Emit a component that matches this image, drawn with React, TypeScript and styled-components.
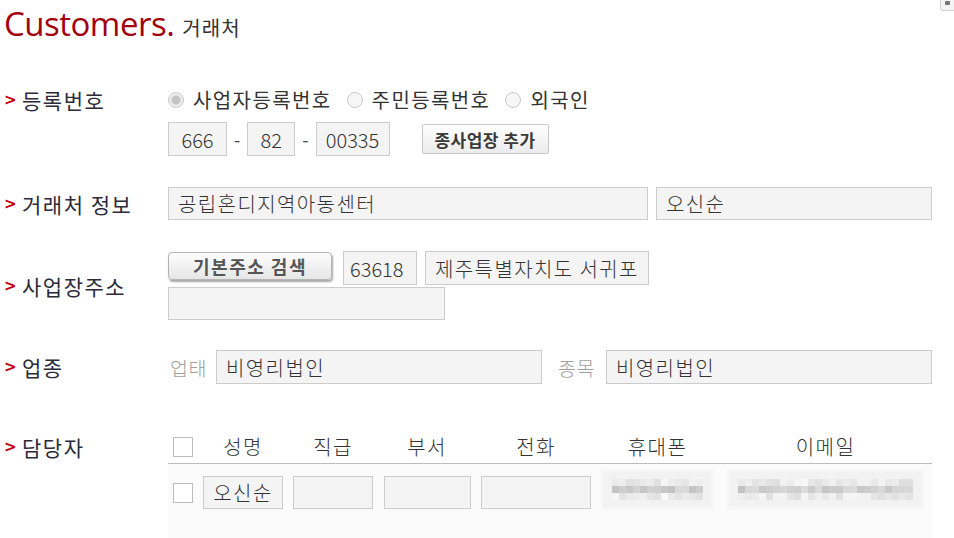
import * as React from "react";
import styled, { createGlobalStyle, css } from "styled-components";

const GlobalStyle = createGlobalStyle`
  html, body {
    margin: 0;
    padding: 0;
    background: #ffffff;
  }
  body {
    font-family: "Noto Sans CJK KR", "Noto Sans", sans-serif;
    color: #333333;
    overflow: hidden;
  }
`;

const Page = styled.div`
  position: relative;
  width: 954px;
  height: 538px;
  padding-left: 4px;
  box-sizing: border-box;
  overflow: hidden;
`;

const Corner = styled.div`
  position: absolute;
  top: -5px;
  right: -8px;
  width: 20px;
  height: 14px;
  border: 1px solid #cfcfcf;
  border-radius: 3px;
  background: #f4f4f4;
  &::after {
    content: "";
    position: absolute;
    left: 4px;
    top: 5px;
    width: 5px;
    height: 4px;
    background: #777;
    border-radius: 1px;
  }
`;

const Title = styled.h1`
  display: flex;
  align-items: baseline;
  height: 50px;
  margin: 0;
  padding-top: 4px;
  box-sizing: border-box;
  font-weight: normal;
`;

const TitleMain = styled.span`
  font-family: "Open Sans", Lato, sans-serif;
  font-size: 33px;
  font-weight: 400;
  letter-spacing: -0.5px;
  line-height: 40px;
  color: #a3000f;
`;

const TitleSub = styled.span`
  margin-left: 8px;
  font-size: 20px;
  letter-spacing: 1px;
  color: #333;
`;

const Section = styled.section<{ $top: number; $align?: "start" | "center" }>`
  display: grid;
  grid-template-columns: 164px 764px;
  align-items: ${(p) => p.$align ?? "center"};
  margin-top: ${(p) => p.$top}px;
`;

const Label = styled.div<{ $h?: number }>`
  display: flex;
  align-items: center;
  height: ${(p) => (p.$h ? `${p.$h}px` : "auto")};
  font-size: 21px;
  font-weight: 400;
  letter-spacing: 1.5px;
  color: #2b2b3a;
  white-space: nowrap;
  &::before {
    content: ">";
    width: 18px;
    font-family: "DejaVu Sans", sans-serif;
    font-size: 15px;
    font-weight: bold;
    letter-spacing: 0;
    color: #c40016;
  }
`;

const Column = styled.div<{ $gap: number }>`
  display: flex;
  flex-direction: column;
  gap: ${(p) => p.$gap}px;
`;

const Line = styled.div<{ $gap?: number }>`
  display: flex;
  align-items: center;
  gap: ${(p) => p.$gap ?? 8}px;
`;

const RadioGroup = styled.div`
  display: flex;
  align-items: center;
  height: 24px;
  gap: 15px;
`;

const RadioItem = styled.label`
  display: flex;
  align-items: center;
  gap: 9px;
  font-size: 20px;
  letter-spacing: 1.4px;
  line-height: 24px;
  color: #333;
  white-space: nowrap;
`;

const RadioDot = styled.span<{ $checked?: boolean }>`
  width: 16px;
  height: 16px;
  border-radius: 50%;
  box-sizing: border-box;
  border: 1px solid #c9c9c9;
  background: #f7f7f7;
  ${(p) =>
    p.$checked &&
    css`
      background: radial-gradient(circle, #c4c4c4 0 4px, #ececec 5px);
    `}
`;

const Field = styled.input<{ $w: number; $h?: number; $center?: boolean; $num?: boolean }>`
  flex-shrink: 0;
  width: ${(p) => p.$w}px;
  height: ${(p) => p.$h ?? 34}px;
  box-sizing: border-box;
  padding: 0 ${(p) => (p.$num ? 6 : 9)}px;
  border: 1px solid #cccccc;
  background: #f4f4f4;
  font-family: "Noto Sans CJK KR", "Noto Sans", sans-serif;
  font-size: 20px;
  font-weight: 300;
  letter-spacing: ${(p) => (p.$num ? 0 : 1.4)}px;
  color: #333;
  text-align: ${(p) => (p.$center ? "center" : "left")};
  outline: none;
`;

const Dash = styled.span`
  font-size: 18px;
  color: #444;
  margin: 0 2px;
`;

const SmallButton = styled.button`
  flex-shrink: 0;
  height: 30px;
  width: 127px;
  margin-left: 27px;
  padding: 0;
  border: 1px solid #c8c8c8;
  border-radius: 2px;
  background: linear-gradient(#ffffff, #ebebeb);
  font-family: "Noto Sans CJK KR", sans-serif;
  font-size: 17px;
  font-weight: bold;
  letter-spacing: 0.5px;
  color: #3a3a3a;
  cursor: pointer;
`;

const SearchButton = styled.button`
  flex-shrink: 0;
  width: 164px;
  height: 28px;
  margin-top: 1px;
  margin-right: 3px;
  align-self: flex-start;
  padding: 0;
  border: 1px solid #b4b4b4;
  border-radius: 4px;
  background: linear-gradient(#fdfdfd, #e6e6e6);
  box-shadow: 1px 2px 2px rgba(0, 0, 0, 0.35);
  font-family: "Noto Sans CJK KR", sans-serif;
  font-size: 18px;
  font-weight: bold;
  letter-spacing: 1.5px;
  color: #555;
  cursor: pointer;
`;

const Caption = styled.span<{ $lead: number; $w: number }>`
  flex-shrink: 0;
  width: ${(p) => p.$w}px;
  white-space: nowrap;
  font-size: 19.5px;
  font-weight: 300;
  letter-spacing: 0.5px;
  color: #a0a0a0;
  margin-left: ${(p) => p.$lead}px;
`;

const Table = styled.div`
  display: flex;
  flex-direction: column;
`;

const TableRow = styled.div<{ $head?: boolean }>`
  display: grid;
  grid-template-columns: 30px 90px 90px 98px 120px 123px 213px;
  justify-items: center;
  align-items: center;
  ${(p) =>
    p.$head
      ? css`
          height: 33px;
          border-bottom: 1px solid #bdbdbd;
        `
      : css`
          padding: 11px 0 40px;
          background: #fbfbfb;
        `}
`;

const HeadCell = styled.span`
  font-size: 20px;
  font-weight: 300;
  letter-spacing: 1.4px;
  color: #333;
  line-height: 24px;
  white-space: nowrap;
`;

const CheckBox = styled.span`
  width: 20px;
  height: 20px;
  box-sizing: border-box;
  border: 1px solid #bcbcbc;
  background: #fff;
`;

const Mosaic = styled.div<{ $w: number; $cols: number }>`
  width: ${(p) => p.$w}px;
  height: 41px;
  margin-top: -6px;
  box-sizing: border-box;
  padding: 0 10px;
  background: #f2f2f2;
  box-shadow: inset 0 0 0 3px #f6f6f6;
  display: grid;
  grid-template-columns: repeat(${(p) => p.$cols}, 7px);
  grid-auto-rows: 7px;
  align-content: center;
  justify-content: center;
`;

const Pixel = styled.span`
  display: block;
`;

// pseudo-random grays for the blurred (privacy) cells
const mosaicShades = (cols: number, seed: number) => {
  const out: string[] = [];
  let s = seed;
  for (let i = 0; i < cols * 3; i++) {
    s = (s * 9301 + 49297) % 233280;
    const r = s / 233280;
    const row = Math.floor(i / cols);
    const base = row === 1 ? 200 : 222;
    const v = Math.round(base + r * 26 - (row === 1 ? 6 : 0));
    out.push(`rgb(${v},${v},${v})`);
  }
  return out;
};

const contacts = [
  { name: "오신순", rank: "", dept: "", phone: "" },
];

const App: React.FC = () => {
  const phoneShades = mosaicShades(13, 7);
  const mailShades = mosaicShades(25, 31);

  return (
    <Page>
      <GlobalStyle />
      <Corner />
      <Title>
        <TitleMain>Customers.</TitleMain>
        <TitleSub>거래처</TitleSub>
      </Title>

      <Section $top={38} $align="start">
        <Label $h={24}>등록번호</Label>
        <Column $gap={10}>
          <RadioGroup>
            <RadioItem>
              <RadioDot $checked />
              사업자등록번호
            </RadioItem>
            <RadioItem>
              <RadioDot />
              주민등록번호
            </RadioItem>
            <RadioItem>
              <RadioDot />
              외국인
            </RadioItem>
          </RadioGroup>
          <Line $gap={5}>
            <Field $w={59} $center $num readOnly value="666" />
            <Dash>-</Dash>
            <Field $w={48} $center $num readOnly value="82" />
            <Dash>-</Dash>
            <Field $w={74} $center $num readOnly value="00335" />
            <SmallButton>종사업장 추가</SmallButton>
          </Line>
        </Column>
      </Section>

      <Section $top={31}>
        <Label>거래처 정보</Label>
        <Line>
          <Field $w={480} $h={33} readOnly value="공립혼디지역아동센터" />
          <Field $w={276} $h={33} readOnly value="오신순" />
        </Line>
      </Section>

      <Section $top={31}>
        <Label>사업장주소</Label>
        <Column $gap={2}>
          <Line>
            <SearchButton>기본주소 검색</SearchButton>
            <Field $w={74} $num readOnly value="63618" />
            <Field $w={224} readOnly value="제주특별자치도 서귀포" />
          </Line>
          <Field $w={277} $h={33} readOnly value="" />
        </Column>
      </Section>

      <Section $top={30}>
        <Label>업종</Label>
        <Line $gap={8}>
          <Caption $lead={2} $w={38}>업태</Caption>
          <Field $w={326} readOnly value="비영리법인" />
          <Caption $lead={8} $w={40}>종목</Caption>
          <Field $w={326} readOnly value="비영리법인" />
        </Line>
      </Section>

      <Section $top={46} $align="start">
        <Label $h={33}>담당자</Label>
        <Table>
          <TableRow $head>
            <CheckBox />
            <HeadCell>성명</HeadCell>
            <HeadCell>직급</HeadCell>
            <HeadCell>부서</HeadCell>
            <HeadCell>전화</HeadCell>
            <HeadCell>휴대폰</HeadCell>
            <HeadCell>이메일</HeadCell>
          </TableRow>
          {contacts.map((c) => (
            <TableRow key={c.name}>
              <CheckBox />
              <Field $w={80} $h={33} $center readOnly value={c.name} />
              <Field $w={80} $h={33} readOnly value={c.rank} />
              <Field $w={87} $h={33} readOnly value={c.dept} />
              <Field $w={110} $h={33} readOnly value={c.phone} />
              <Mosaic $w={113} $cols={13}>
                {phoneShades.map((bg, i) => (
                  <Pixel key={i} style={{ background: bg }} />
                ))}
              </Mosaic>
              <Mosaic $w={197} $cols={25}>
                {mailShades.map((bg, i) => (
                  <Pixel key={i} style={{ background: bg }} />
                ))}
              </Mosaic>
            </TableRow>
          ))}
        </Table>
      </Section>
    </Page>
  );
};

export default App;
